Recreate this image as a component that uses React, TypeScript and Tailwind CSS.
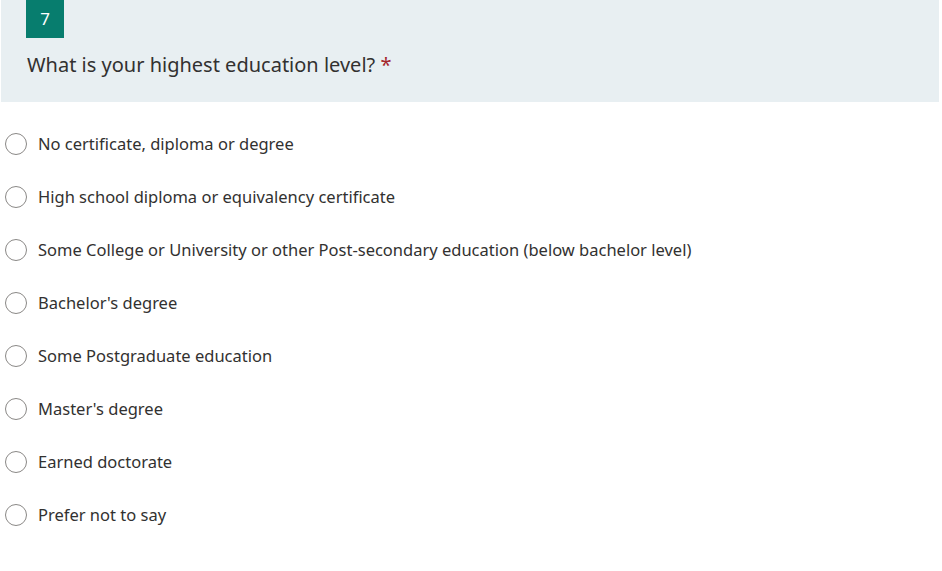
const options = [
  "No certificate, diploma or degree",
  "High school diploma or equivalency certificate",
  "Some College or University or other Post-secondary education (below bachelor level)",
  "Bachelor's degree",
  "Some Postgraduate education",
  "Master's degree",
  "Earned doctorate",
  "Prefer not to say",
];

export default function App() {
  return (
    <div className="w-[942px] h-[571px] bg-white font-['Noto_Sans',sans-serif] text-[#333333]">
      <div className="ml-px w-[938px] h-[102px] bg-[#e8eff2] pl-[25px]">
        <div className="w-[38px] h-[38px] bg-[#077d6e] text-white text-[17px] flex items-center justify-center">
          7
        </div>
        <div className="mt-[13px] ml-px text-[20px] leading-[28px] text-[#323130]">
          What is your highest education level?{" "}
          <span className="text-[#a4262c]">*</span>
        </div>
      </div>
      <div className="pt-[31px] flex flex-col gap-[31px]">
        {options.map((o) => (
          <label key={o} className="flex items-center h-[22px] pl-[5px]">
            <span className="w-[22px] h-[22px] rounded-full border border-[#8a8886] bg-white shrink-0" />
            <span className="ml-[11px] text-[16.5px] text-[#323130]">{o}</span>
          </label>
        ))}
      </div>
    </div>
  );
}
